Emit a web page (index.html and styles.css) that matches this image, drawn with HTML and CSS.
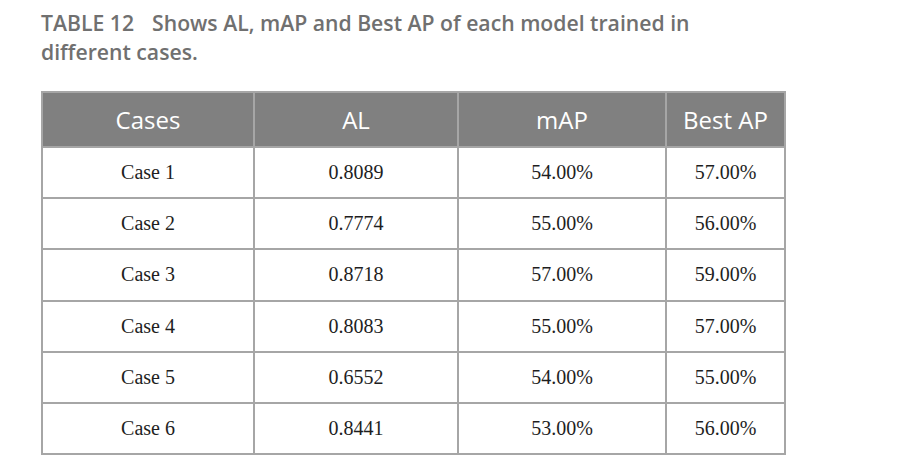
FILE: index.html
```html
<!DOCTYPE html>
<html lang="en">
<head>
<meta charset="utf-8">
<title>Table 12</title>
<link rel="stylesheet" href="styles.css">
</head>
<body>
<div class="page">
  <p class="caption"><span class="label">TABLE 12</span>Shows AL, mAP and Best AP of each model trained in different cases.</p>
  <table class="data">
    <colgroup>
      <col class="c1"><col class="c2"><col class="c3"><col class="c4">
    </colgroup>
    <thead>
      <tr><th>Cases</th><th>AL</th><th>mAP</th><th>Best AP</th></tr>
    </thead>
    <tbody>
      <tr><td>Case 1</td><td>0.8089</td><td>54.00%</td><td>57.00%</td></tr>
      <tr><td>Case 2</td><td>0.7774</td><td>55.00%</td><td>56.00%</td></tr>
      <tr><td>Case 3</td><td>0.8718</td><td>57.00%</td><td>59.00%</td></tr>
      <tr><td>Case 4</td><td>0.8083</td><td>55.00%</td><td>57.00%</td></tr>
      <tr><td>Case 5</td><td>0.6552</td><td>54.00%</td><td>55.00%</td></tr>
      <tr><td>Case 6</td><td>0.8441</td><td>53.00%</td><td>56.00%</td></tr>
    </tbody>
  </table>
</div>
</body>
</html>
```
FILE: styles.css
```css
html, body {
  margin: 0;
  padding: 0;
  background: #ffffff;
}
.page {
  padding: 8px 0 0 41px;
}
.caption {
  margin: 0;
  width: 700px;
  font-family: "Open Sans", sans-serif;
  font-weight: 600;
  font-size: 21.2px;
  line-height: 29px;
  color: #707070;
}
.label {
  display: inline-block;
  margin-right: 18px;
}
.data {
  margin-top: 25px;
  border-collapse: collapse;
  table-layout: fixed;
  width: 745px;
}
.c1 { width: 212px; }
.c2 { width: 204px; }
.c3 { width: 208px; }
.c4 { width: 119px; }
.data th, .data td {
  border: 2px solid #a6a6a6;
  padding: 0;
  text-align: center;
  vertical-align: middle;
}
.data th {
  height: 53px;
  background: #808080;
  color: #ffffff;
  font-family: "Open Sans", sans-serif;
  font-weight: 400;
  font-size: 24px;
}
.data td {
  height: 49.2px;
  font-family: "Liberation Serif", serif;
  font-size: 20px;
  color: #1e1e1e;
}
```
